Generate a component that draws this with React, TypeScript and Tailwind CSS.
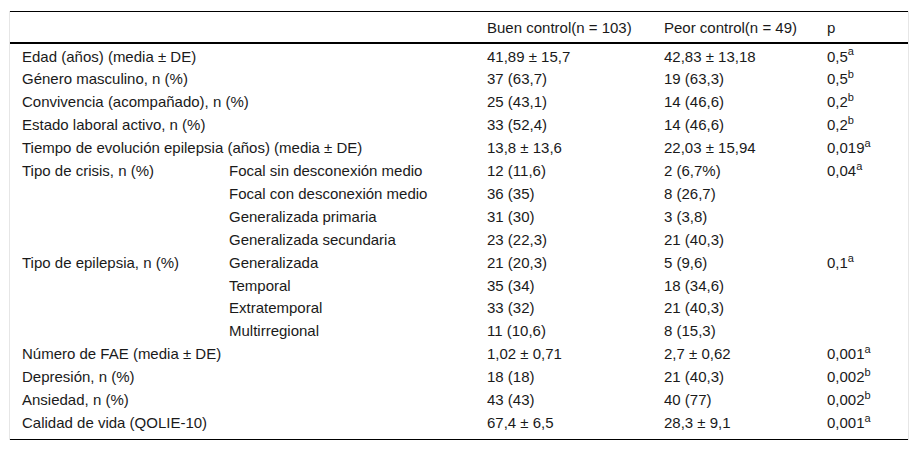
type Row = {
  label: string;
  sub?: string;
  span?: boolean;
  good: string;
  bad: string;
  p?: string;
  sup?: string;
};

const rows: Row[] = [
  { label: 'Edad (años) (media ± DE)', span: true, good: '41,89 ± 15,7', bad: '42,83 ± 13,18', p: '0,5', sup: 'a' },
  { label: 'Género masculino, n (%)', span: true, good: '37 (63,7)', bad: '19 (63,3)', p: '0,5', sup: 'b' },
  { label: 'Convivencia (acompañado), n (%)', span: true, good: '25 (43,1)', bad: '14 (46,6)', p: '0,2', sup: 'b' },
  { label: 'Estado laboral activo, n (%)', span: true, good: '33 (52,4)', bad: '14 (46,6)', p: '0,2', sup: 'b' },
  { label: 'Tiempo de evolución epilepsia (años) (media ± DE)', span: true, good: '13,8 ± 13,6', bad: '22,03 ± 15,94', p: '0,019', sup: 'a' },
  { label: 'Tipo de crisis, n (%)', sub: 'Focal sin desconexión medio', good: '12 (11,6)', bad: '2 (6,7%)', p: '0,04', sup: 'a' },
  { label: '', sub: 'Focal con desconexión medio', good: '36 (35)', bad: '8 (26,7)' },
  { label: '', sub: 'Generalizada primaria', good: '31 (30)', bad: '3 (3,8)' },
  { label: '', sub: 'Generalizada secundaria', good: '23 (22,3)', bad: '21 (40,3)' },
  { label: 'Tipo de epilepsia, n (%)', sub: 'Generalizada', good: '21 (20,3)', bad: '5 (9,6)', p: '0,1', sup: 'a' },
  { label: '', sub: 'Temporal', good: '35 (34)', bad: '18 (34,6)' },
  { label: '', sub: 'Extratemporal', good: '33 (32)', bad: '21 (40,3)' },
  { label: '', sub: 'Multirregional', good: '11 (10,6)', bad: '8 (15,3)' },
  { label: 'Número de FAE (media ± DE)', span: true, good: '1,02 ± 0,71', bad: '2,7 ± 0,62', p: '0,001', sup: 'a' },
  { label: 'Depresión, n (%)', span: true, good: '18 (18)', bad: '21 (40,3)', p: '0,002', sup: 'b' },
  { label: 'Ansiedad, n (%)', span: true, good: '43 (43)', bad: '40 (77)', p: '0,002', sup: 'b' },
  { label: 'Calidad de vida (QOLIE-10)', span: true, good: '67,4 ± 6,5', bad: '28,3 ± 9,1', p: '0,001', sup: 'a' },
];

export default function App() {
  return (
    <div className="min-h-screen bg-white pt-[11px] font-['Liberation_Sans',Arial,sans-serif] text-[15px] text-[#1a1a1a]">
      <div className="ml-[9px] w-[900px] border-x border-[#e6e6e6]">
        <table className="w-full border-collapse table-fixed">
          <colgroup>
            <col className="w-[207px]" />
            <col className="w-[258px]" />
            <col className="w-[177px]" />
            <col className="w-[163px]" />
            <col />
          </colgroup>
          <thead>
            <tr className="border-t border-b-2 border-black">
              <th className="h-[31px] px-3 p-0" colSpan={2}></th>
              <th className="px-3 pt-[2px] text-left font-normal">Buen control(n = 103)</th>
              <th className="px-3 pt-[2px] text-left font-normal">Peor control(n = 49)</th>
              <th className="px-3 pt-[2px] text-left font-normal">p</th>
            </tr>
          </thead>
          <tbody className="border-b border-black">
            {rows.map((r, i) => {
              const first = i === 0;
              const last = i === rows.length - 1;
              const cell = `px-3 whitespace-nowrap align-top leading-[22.9px] ${first ? 'pt-[2px]' : ''} ${last ? 'pb-[4px]' : ''}`;
              return (
                <tr key={i}>
                  {r.span ? (
                    <td className={cell} colSpan={2}>{r.label}</td>
                  ) : (
                    <>
                      <td className={cell}>{r.label}</td>
                      <td className={cell}>{r.sub}</td>
                    </>
                  )}
                  <td className={cell}>{r.good}</td>
                  <td className={cell}>{r.bad}</td>
                  <td className={cell}>
                    {r.p}
                    {r.sup && <sup className="text-[11px] top-[-0.55em]">{r.sup}</sup>}
                  </td>
                </tr>
              );
            })}
          </tbody>
        </table>
      </div>
    </div>
  );
}
